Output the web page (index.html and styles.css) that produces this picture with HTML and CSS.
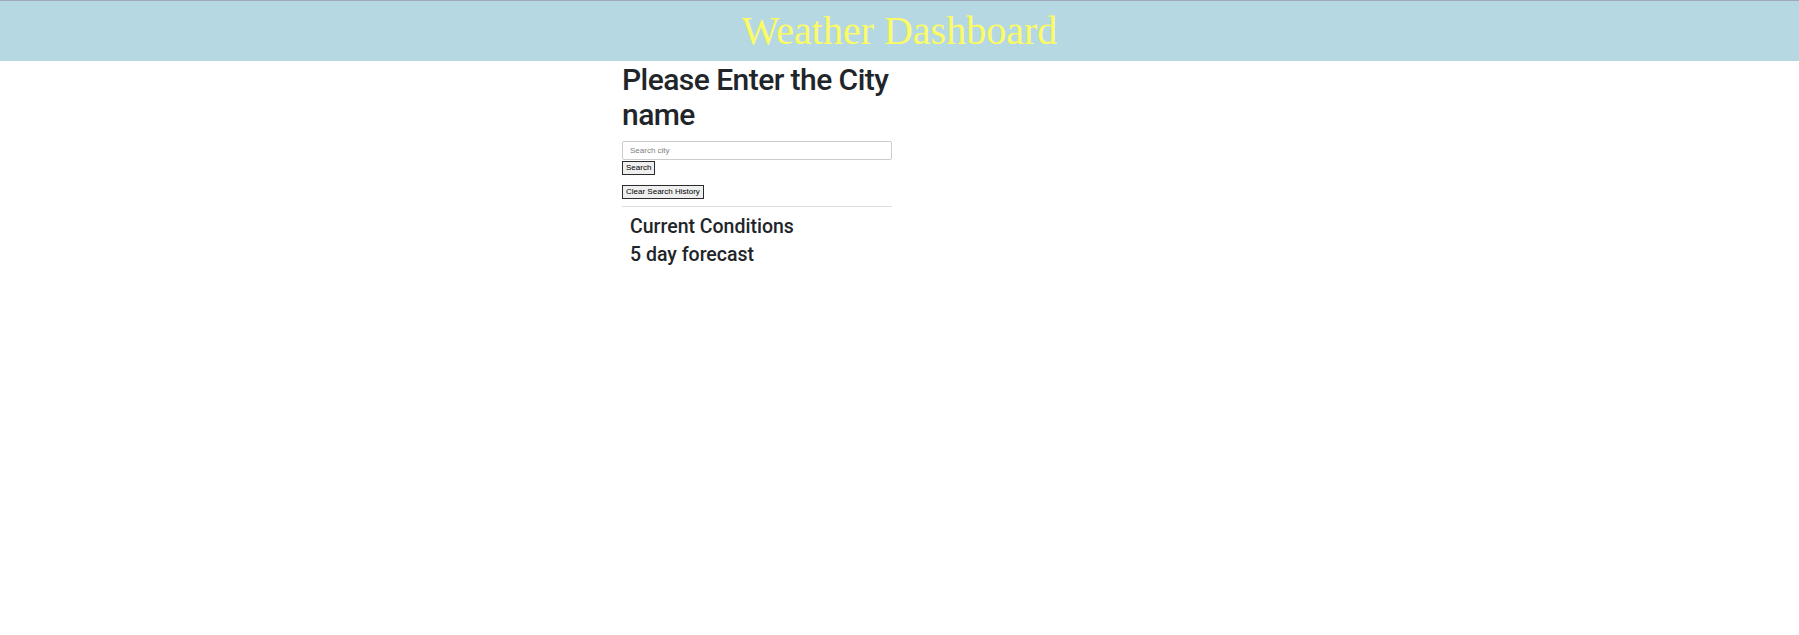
FILE: index.html
```html
<!DOCTYPE html>
<html lang="en">
<head>
<meta charset="utf-8">
<title>Weather Dashboard</title>
<link rel="stylesheet" href="styles.css">
</head>
<body>
<header class="site-header">
  <h1 class="site-title">Weather Dashboard</h1>
</header>
<main class="page">
  <section class="search-col">
    <h2 class="prompt">Please Enter the City name</h2>
    <form class="search-form">
      <input class="city-input" type="text" placeholder="Search city">
      <button class="btn" type="button">Search</button>
    </form>
    <button class="btn clear-btn" type="button">Clear Search History</button>
    <hr class="divider">
    <div class="results">
      <h3 class="section-title">Current Conditions</h3>
      <h3 class="section-title">5 day forecast</h3>
    </div>
  </section>
</main>
</body>
</html>
```

FILE: styles.css
```css
* {
  box-sizing: border-box;
}

body {
  margin: 0;
  background: #ffffff;
  color: #212529;
  font-family: Roboto, "Noto Sans", sans-serif;
}

.site-header {
  height: 61px;
  background: #b6d8e3;
  border-top: 1px solid #9ea9ba;
  padding-top: 6px;
  text-align: center;
}

.site-title {
  margin: 0;
  font-family: "Liberation Serif", serif;
  font-weight: 400;
  font-size: 40px;
  line-height: 48px;
  color: #fbfb66;
}

.page {
  padding-left: 622px;
}

.search-col {
  width: 270px;
}

.prompt {
  margin: 1px 0 9px;
  font-size: 30px;
  font-weight: 500;
  line-height: 35px;
  letter-spacing: -0.55px;
}

.search-form {
  margin: 0;
  display: flex;
  flex-direction: column;
  align-items: flex-start;
  gap: 1px;
}

.city-input {
  width: 270px;
  height: 19px;
  margin: 0;
  padding: 0 7px;
  border: 1px solid #c9cdd2;
  border-radius: 2px;
  font-family: "Liberation Sans", sans-serif;
  font-size: 8px;
  color: #212529;
}

.city-input::placeholder {
  color: #7a7f85;
}

.btn {
  display: block;
  height: 14px;
  margin: 0;
  padding: 0 3px;
  border: 1px solid #2b2b2b;
  border-radius: 0;
  background: #efefef;
  font-family: "Liberation Sans", sans-serif;
  font-size: 8px;
  line-height: 12px;
  color: #000;
}

.clear-btn {
  margin-top: 10px;
  height: 14px;
}

.divider {
  margin: 7px 0 0;
  border: 0;
  border-top: 1px solid #dcdfe2;
}

.results {
  padding: 7px 8px 0;
}

.section-title {
  margin: 0 0 2px;
  font-size: 19.5px;
  font-weight: 500;
  line-height: 26px;
}
```
